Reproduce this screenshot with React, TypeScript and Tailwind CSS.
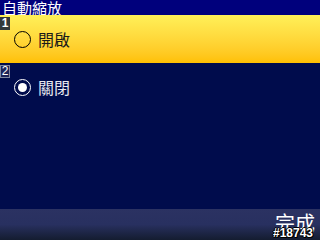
export default function App() {
  const font = { fontFamily: '"Noto Sans CJK TC", "Noto Sans CJK SC", "Liberation Sans", sans-serif' };
  return (
    <div className="w-[320px] h-[240px] flex flex-col bg-[#000c4c] overflow-hidden" style={font}>
      <div className="h-[15px] bg-[#00007c] pl-[2px] text-white text-[15px] leading-[15px]">自動縮放</div>
      <div className="h-[48px] bg-gradient-to-b from-[#fff058] to-[#ffc000] relative flex items-center">
        <div className="absolute left-0 top-[2px] w-[10px] h-[13px] bg-[#34393c] text-white text-[12px] leading-[13px] text-center font-bold" style={{ fontFamily: '"Liberation Sans", sans-serif' }}>1</div>
        <div className="ml-[14px] mt-[1px] w-[17px] h-[17px] rounded-full border border-black" />
        <div className="ml-[7px] text-[16px] leading-[18px] text-[#1a1a1a]">開啟</div>
      </div>
      <div className="h-[48px] relative flex items-center">
        <div className="absolute left-0 top-[2px] w-[10px] h-[13px] bg-[#1c2358] border border-[#8088a0] text-white text-[12px] leading-[11px] text-center" style={{ fontFamily: '"Liberation Sans", sans-serif' }}>2</div>
        <div className="ml-[14px] mt-[1px] w-[17px] h-[17px] rounded-full border-[1.5px] border-white flex items-center justify-center">
          <div className="w-[9px] h-[9px] rounded-full bg-white" />
        </div>
        <div className="ml-[7px] text-[16px] leading-[18px] text-[#e8e8f0]">關閉</div>
      </div>
      <div className="flex-1" />
      <div className="h-[31px] bg-gradient-to-b from-[#2b3262] via-[#283060] to-[#141c30] relative">
        <div className="absolute right-[5px] top-[3px] text-white text-[20px] leading-[22px]">完成</div>
        <div className="absolute right-[7px] bottom-[1px] text-white text-[12px] leading-[12px] font-bold" style={{ fontFamily: '"Liberation Sans", sans-serif', textShadow: '1px 0 0 #000, -1px 0 0 #000, 0 1px 0 #000, 0 -1px 0 #000, 1px 1px 0 #000' }}>#18743</div>
      </div>
    </div>
  );
}
